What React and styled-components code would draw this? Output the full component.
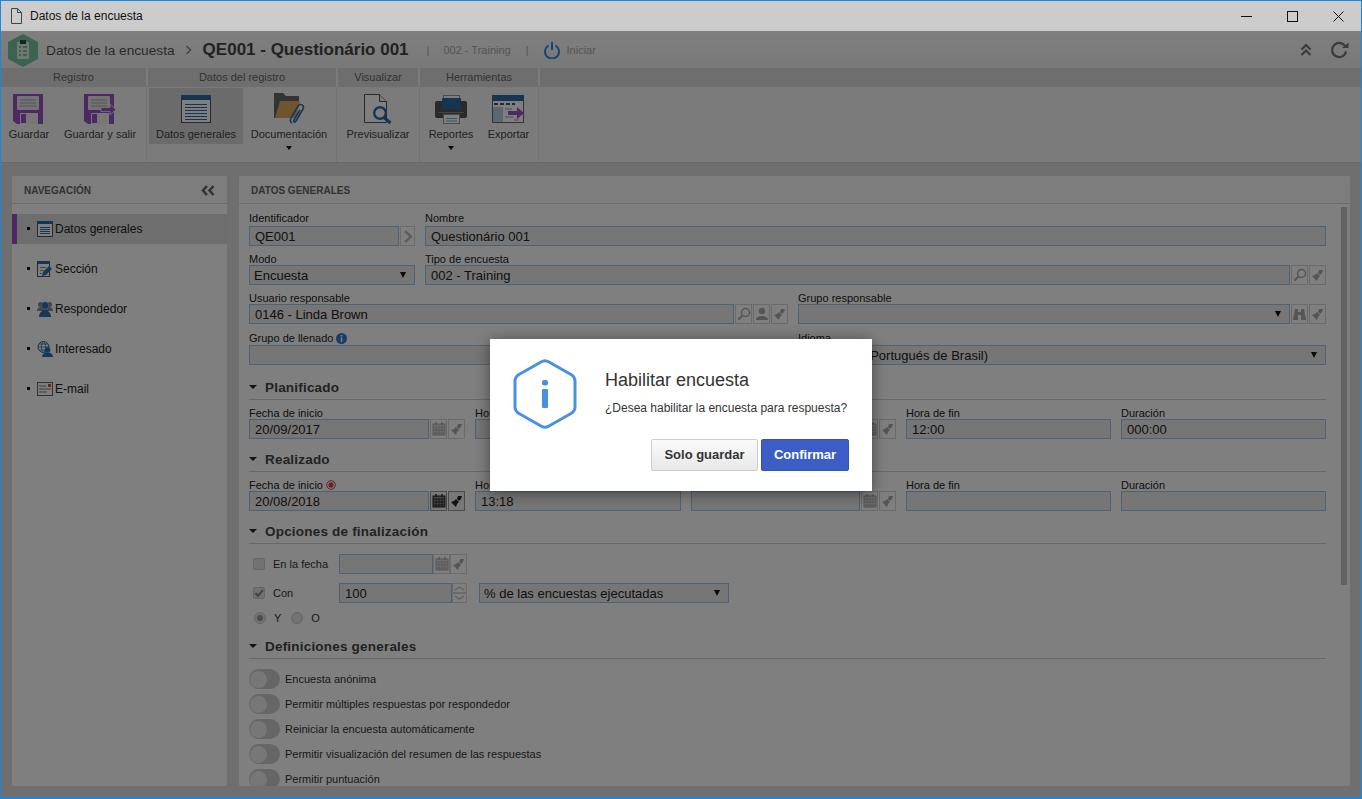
import React from "react";
import styled, { createGlobalStyle } from "styled-components";

const Global = createGlobalStyle`
  html, body { margin: 0; padding: 0; height: 100%; overflow: hidden; }
  body { font-family: "Liberation Sans", Arial, sans-serif; font-size: 12px; color: #222; }
  * { box-sizing: border-box; }
`;

const Window = styled.div`
  width: 1362px; height: 799px; display: flex; flex-direction: column;
  border: 1px solid #1b88e0; border-bottom-width: 2px; position: relative; background: #dedede; overflow: hidden;
`;
const TitleBar = styled.div`
  height: 30px; flex: none; background: #ccc; display: flex; align-items: center; padding-left: 9px; color: #111;
`;
const TitleIcon = styled.span` display: flex; margin-right: 7px; `;
const TitleText = styled.span` flex: 1; font-size: 12px; `;
const WinButton = styled.div` width: 46px; height: 30px; display: flex; align-items: center; justify-content: center; `;

const Header = styled.div`
  height: 37px; flex: none; background: linear-gradient(#fff, #f2f2f2); display: flex; align-items: center; padding: 1px 10px 0 7px;
`;
const Crumb = styled.span` font-size: 13.7px; color: #555; margin-left: 8px; `;
const CrumbSep = styled.span` margin: 0 10px; display: flex; `;
const Heading = styled.span` font-size: 17px; font-weight: bold; color: #444; `;
const HeaderSub = styled.span` font-size: 11px; color: #aaa; margin-left: ${p => p.$ml || 0}px; `;
const PowerWrap = styled.span` margin-left: 15px; display: flex; `;
const HeaderGrow = styled.div` flex: 1; `;
const HeaderTools = styled.div` display: flex; align-items: center; gap: 18px; padding-right: 2px; `;

const RibbonTabs = styled.div` height: 19px; flex: none; display: flex; background: #f6f6f6; gap: 2px; `;
const RibbonTab = styled.div`
  width: ${p => p.$w}px; flex: ${p => (p.$grow ? 1 : "none")}; background: #dcdcdc; text-align: center; line-height: 19px; font-size: 11px; color: #666;
`;
const Ribbon = styled.div` height: 76px; flex: none; display: flex; background: #f6f6f6; border-bottom: 1px solid #d2d2d2; `;
const RibbonGroup = styled.div`
  width: ${p => p.$w}px; flex: none; display: flex; gap: ${p => p.$gap || 0}px; padding-left: ${p => p.$pl || 0}px; padding-top: 1px; border-right: 1px solid #e4e4e4;
`;
const RibbonButton = styled.div`
  width: ${p => p.$w}px; height: 56px; flex: none; display: flex; flex-direction: column; align-items: center; padding-top: 4px; position: relative;
  background: ${p => (p.$active ? "#d6d6d6" : "transparent")}; color: #444; font-size: 11px;
`;
const RibbonIcon = styled.div` height: 34px; display: flex; align-items: center; justify-content: center; `;
const RibbonLabel = styled.span` margin-top: 2px; white-space: nowrap; line-height: 13px; `;
const Caret = styled.span`
  position: absolute; left: 50%; top: 58px; margin-left: -3px; border: 3px solid transparent; border-top: 4px solid #111; border-bottom: 0;
`;

const Body = styled.div` flex: 1; min-height: 0; display: flex; gap: 12px; padding: 13px 11px 11px 11px; background: #dedede; `;
const Panel = styled.div`
  width: ${p => (p.$w ? p.$w + "px" : "auto")}; flex: ${p => (p.$w ? "none" : 1)}; background: #fff; display: flex; flex-direction: column; position: relative; overflow: hidden; border-radius: 2px;
`;
const PanelHeader = styled.div`
  height: 28px; flex: none; display: flex; align-items: center; justify-content: space-between; padding: 2px 12px 0; background: #fbfbfb; border-bottom: 1px solid #d8d8d8;
  font-size: 10px; font-weight: bold; color: #666;
`;
const NavList = styled.div` display: flex; flex-direction: column; gap: 10px; padding-top: 10px; `;
const NavRow = styled.div`
  height: 30px; display: flex; align-items: center; padding-left: 15px; font-size: 12px; color: #222;
  background: ${p => (p.$on ? "#dcdcdc" : "transparent")};
  border-left: 5px solid ${p => (p.$on ? "#9a52c8" : "transparent")};
`;
const Bullet = styled.span` width: 3px; height: 3px; background: #111; margin-right: 7px; margin-left: -5px; margin-top: -2px; `;
const NavIcon = styled.span` width: 16px; height: 16px; display: flex; margin-right: 2px; `;

const Form = styled.div` padding: 8px 24px 0 10px; display: flex; flex-direction: column; width: 1111px; `;
const Row = styled.div` display: flex; gap: 10px; margin-top: ${p => p.$mt ?? 7}px; `;
const Field = styled.div`
  width: ${p => (p.$w ? p.$w + "px" : "auto")}; flex: ${p => (p.$w ? "none" : 1)}; min-width: 0; display: flex; flex-direction: column;
`;
const Label = styled.label`
  height: 12px; flex: none; line-height: 11px; font-size: 11px; color: #222; display: flex; align-items: center; gap: 3px; white-space: nowrap;
  margin-bottom: ${p => p.$mb || 0}px;
`;
const InputLine = styled.div` display: flex; gap: 1px; height: 20px; flex: none; `;
const Input = styled.div`
  flex: ${p => (p.$w ? "none" : "1 1 auto")}; width: ${p => (p.$w ? p.$w + "px" : "auto")}; min-width: 0; height: 20px; border: 1px solid #9dc4ee; background: #ececec;
  margin-left: ${p => p.$ml || 0}px; overflow: hidden;
  line-height: 16px; padding: 1px 5px 0 ${p => (p.$sel ? 4 : 5)}px; font-size: 13px; color: #222; display: flex; justify-content: space-between; align-items: center; white-space: nowrap;
`;
const BoxInput = styled(Input)` flex: none; width: 100%; `;
const SelArrow = styled.span` border: 3px solid transparent; border-top: 6px solid #111; border-bottom: 0; margin-right: 3px; margin-top: -1px; `;
const IconBtn = styled.div`
  width: ${p => p.$w || 17}px; height: 20px; flex: none; border: 1px solid ${p => (p.$dark ? "#999" : "#d6d6d6")}; display: flex; align-items: center; justify-content: center; background: ${p => (p.$dark ? "#f0f0f0" : "#fff")};
`;
const Section = styled.div`
  height: 22px; flex: none; margin-top: ${p => p.$mt ?? 11}px; padding-top: 2px; border-bottom: 1px solid #d0d0d0; display: flex; align-items: flex-start; font-size: 13.5px; font-weight: bold; color: #444; line-height: 16px; letter-spacing: 0.2px;
`;
const SectionCaret = styled.span` width: 0; height: 0; border-style: solid; border-color: #222 transparent transparent; border-width: 4px 4px 0; margin: 5px 8px 0 0; `;
const Spacer = styled.div` height: 7px; flex: none; `;
const OptionRow = styled.div` display: flex; align-items: center; height: 20px; flex: none; margin-top: ${p => p.$mt}px; font-size: 11px; color: #333; `;
const Check = styled.span`
  width: 12px; height: 12px; margin-left: 4px; margin-right: 8px; border: 1px solid #ccc; background: #e4e4e4; border-radius: 2px; display: flex; align-items: center; justify-content: center; flex: none;
`;
const OptionLabel = styled.span` width: 66px; flex: none; `;
const RadioRow = styled.div` display: flex; align-items: center; height: 16px; flex: none; margin-top: 7px; font-size: 11px; color: #333; padding-left: 5px; `;
const Radio = styled.span`
  width: 12px; height: 12px; border-radius: 50%; border: 1px solid #ccc; background: #e4e4e4; display: flex; align-items: center; justify-content: center; flex: none;
  margin-right: 8px;
  &::after { content: ""; width: 6px; height: 6px; border-radius: 50%; background: ${p => (p.$on ? "#999" : "transparent")}; }
`;
const RadioText = styled.span` margin-right: ${p => p.$mr || 0}px; `;
const ToggleList = styled.div` display: flex; flex-direction: column; gap: 5px; margin-top: 10px; `;
const ToggleRow = styled.div` display: flex; align-items: center; height: 20px; flex: none; font-size: 11px; color: #333; gap: 5px; white-space: nowrap; `;
const Toggle = styled.span`
  width: 31px; height: 20px; border-radius: 10px; background: #ccc; flex: none; display: flex; align-items: center; padding-left: 1px;
  &::after { content: ""; width: 17px; height: 17px; border-radius: 50%; background: #eee; }
`;
const Scroll = styled.div` position: absolute; right: 3px; top: 31px; width: 6px; height: 378px; background: #c6c6c6; `;

const Overlay = styled.div`
  position: absolute; left: 0; right: 0; top: 30px; bottom: 0; background: rgba(0,0,0,.5); display: flex; align-items: center; justify-content: center; padding-top: 2px;
`;
const Modal = styled.div`
  width: 382px; height: 152px; background: #fff; display: flex; box-shadow: 0 2px 14px rgba(0,0,0,.45); padding: 19px 23px 0 23px;
`;
const ModalIcon = styled.div` width: 92px; flex: none; `;
const ModalBody = styled.div` flex: 1; display: flex; flex-direction: column; `;
const ModalTitle = styled.div` font-size: 18px; color: #333; line-height: 22px; margin-top: 11px; `;
const ModalText = styled.div` font-size: 12px; color: #333; line-height: 14px; margin-top: 10px; `;
const ModalActions = styled.div` display: flex; justify-content: flex-end; gap: 3px; margin-top: 24px; `;
const Button = styled.div`
  height: 32px; width: ${p => p.$w}px; border-radius: 2px; font-weight: bold; font-size: 13px; line-height: 30px; text-align: center;
  color: ${p => (p.$primary ? "#fff" : "#333")};
  background: ${p => (p.$primary ? "#3c5cc6" : "linear-gradient(#fafafa,#e8e8e8)")};
  border: 1px solid ${p => (p.$primary ? "#3554b8" : "#ccc")};
`;

/* ---------- icons ---------- */
const PURPLE = "#9a52c8";
const Floppy = ({ arrow }) => (
  <svg width="33" height="31" viewBox="0 0 33 31">
    <path d="M0 0h30v30H4l-4-3z" fill={PURPLE} />
    <rect x="4" y="2" width="22" height="14" rx="1" fill="#e6e6e6" />
    <path d="M7 6h16M7 9h16M7 12h16" stroke="#aaa" />
    <rect x="7" y="19" width="18" height="11" fill="#eee" />
    <rect x="8" y="20" width="5" height="9" fill={PURPLE} />
    {arrow && <path d="M17 13.500h9V10l6 5.500-6 5.500v-3.500h-9z" fill={PURPLE} stroke="#f6f6f6" strokeWidth=".8" />}
  </svg>
);
const DocIcon = () => (
  <svg width="30" height="28" viewBox="0 0 30 28">
    <rect x=".5" y=".5" width="29" height="27" fill="#fff" stroke="#555" />
    <rect x="0" y="0" width="30" height="5" fill="#2b6aa8" />
    <path d="M4 9.500h22M4 12.500h22M4 15.500h22M4 18.500h22M4 21.500h22M4 24.500h22" stroke="#2b6aa8" />
  </svg>
);
const FolderIcon = () => (
  <svg width="31" height="32" viewBox="0 0 31 32">
    <path d="M0 25V0h9l3 3h13v6H8L3 25z" fill="#666" />
    <path d="M1 25L6 8h20l-4 17z" fill="#e0a858" />
    <path d="M18 30c-2-1-2-3-1-5l7-12c2-3 7-1 5 3l-7 12c-1 2-3 1-2-1l6-10" fill="none" stroke="#2b6fb8" strokeWidth="1.600" />
  </svg>
);
const PreviewIcon = () => (
  <svg width="30" height="30" viewBox="0 0 30 30">
    <path d="M1.500 .5h15l7 7v21h-22z" fill="#fff" stroke="#555" />
    <path d="M16.500 .5v7h7" fill="#eee" stroke="#555" />
    <circle cx="17" cy="19" r="5.800" fill="#fff" stroke="#2b6aa8" strokeWidth="2.400" />
    <path d="M21 23.500l6.500 5.500" stroke="#2b6aa8" strokeWidth="3.200" />
  </svg>
);
const PrinterIcon = () => (
  <svg width="32" height="29" viewBox="0 0 32 29">
    <rect x="8.500" y=".5" width="16" height="8" fill="#fff" stroke="#999" />
    <rect x="0" y="6" width="32" height="17" rx="2" fill="#555" />
    <rect x="7" y="3" width="19" height="11" rx="1" fill="#2b6aa8" />
    <path d="M3 17.500h26" stroke="#888" />
    <rect x="8.500" y="19.500" width="16" height="9" fill="#fff" stroke="#999" />
    <path d="M11 23.500h11M11 26h11" stroke="#7ba6cf" />
  </svg>
);
const ExportIcon = () => (
  <svg width="33" height="28" viewBox="0 0 33 28">
    <rect x=".5" y=".5" width="31" height="27" fill="#fff" stroke="#666" />
    <rect x="0" y="0" width="32" height="6" fill="#2b6aa8" />
    <path d="M2 9h4M8 9h4M14 9h4M20 9h3" stroke="#555" strokeWidth="2" />
    <rect x="1" y="12" width="10" height="15" fill="#b4d0e2" />
    <path d="M13 14h7M13 22h8M22 25h5" stroke="#999" />
    <path d="M16 16h9v-4l7 6-7 6v-4h-9z" fill={PURPLE} />
  </svg>
);
const Brush = ({ c = "#aaa" }) => (
  <svg width="13" height="13" viewBox="0 0 13 13">
    <path d="M8 1l4 0-1 3-2 2-2-2z" fill={c} />
    <path d="M6 4l3 3-2 2-1 3-5-5 3-1z" fill={c} />
  </svg>
);
const Magnifier = ({ c = "#aaa" }) => (
  <svg width="14" height="14" viewBox="0 0 14 14">
    <circle cx="8.500" cy="5.500" r="4" fill="none" stroke={c} strokeWidth="1.400" />
    <path d="M5.500 8.500L1.500 12.500" stroke={c} strokeWidth="2" />
  </svg>
);
const UserI = ({ c = "#aaa" }) => (
  <svg width="14" height="14" viewBox="0 0 14 14">
    <circle cx="7" cy="4" r="3.200" fill={c} />
    <path d="M1 13c0-3 3-4 6-4s6 1 6 4z" fill={c} />
  </svg>
);
const Binoculars = ({ c = "#aaa" }) => (
  <svg width="13" height="13" viewBox="0 0 13 13">
    <path d="M2 1h3v3h3V1h3l2 11H8V7H5v5H0z" fill={c} />
  </svg>
);
const Calendar = ({ c = "#aaa" }) => (
  <svg width="14" height="14" viewBox="0 0 14 14">
    <rect x="1" y="2" width="12" height="11" fill={c === "#aaa" ? "#ddd" : "#888"} stroke={c} />
    <path d="M1 5h12M4 5v8M7 5v8M10 5v8M1 8h12M1 11h12" stroke={c} strokeWidth=".8" />
    <path d="M4 0v3M10 0v3" stroke={c} strokeWidth="1.400" />
  </svg>
);
const Chevron = () => (
  <svg width="10" height="13" viewBox="0 0 10 13"><path d="M2 1l6 5.500L2 12" fill="none" stroke="#bbb" strokeWidth="2.500" /></svg>
);
const InfoDot = () => (
  <svg width="11" height="11" viewBox="0 0 11 11">
    <circle cx="5.500" cy="5.500" r="5.500" fill="#2f7cd0" />
    <rect x="4.700" y="2" width="1.600" height="1.600" fill="#fff" /><rect x="4.700" y="4.500" width="1.600" height="4.500" fill="#fff" />
  </svg>
);
const Req = () => (
  <svg width="10" height="10" viewBox="0 0 10 10">
    <circle cx="5" cy="5" r="4.300" fill="none" stroke="#d83a3a" />
    <path d="M5 2v6M2 5h6M3 3l4 4M7 3l-4 4" stroke="#d83a3a" strokeWidth="1.200" />
  </svg>
);
const Spinner = () => (
  <svg width="15" height="20" viewBox="0 0 15 20">
    <rect x=".5" y=".5" width="14" height="9" fill="#fff" stroke="#d6d6d6" />
    <rect x=".5" y="10.500" width="14" height="9" fill="#fff" stroke="#d6d6d6" />
    <path d="M3 7l4.500-3 4.500 3M3 13l4.500 3 4.500-3" fill="none" stroke="#bbb" strokeWidth="1.200" />
  </svg>
);
const navIcons = {
  doc: <svg width="16" height="16" viewBox="0 0 16 16"><rect x=".5" y=".5" width="15" height="15" fill="#fff" stroke="#555" /><rect x="0" y="0" width="16" height="3" fill="#2b6aa8" /><path d="M3 6.500h10M3 8.500h10M3 10.500h10M3 12.500h10" stroke="#2b6aa8" /></svg>,
  edit: <svg width="16" height="16" viewBox="0 0 16 16"><rect x=".5" y=".5" width="12" height="15" fill="#fff" stroke="#555" /><rect x="0" y="0" width="13" height="3" fill="#2b6aa8" /><path d="M3 6.500h6M3 9.500h4M3 12.500h2" stroke="#888" /><path d="M5 15l1-4 6-6 3 3-6 6z" fill="#2b6fb8" /></svg>,
  users: <svg width="16" height="16" viewBox="0 0 16 16"><circle cx="3.500" cy="3.500" r="2.500" fill="#888" /><circle cx="12.500" cy="3.500" r="2.500" fill="#888" /><path d="M0 10c0-3 2-4 4-4h8c2 0 4 1 4 4z" fill="#888" /><circle cx="8" cy="4.500" r="3.800" fill="#2b6fb8" stroke="#ddd" strokeWidth=".5" /><path d="M2 16c0-4 3-7 6-7s6 3 6 7z" fill="#2b6fb8" /></svg>,
  globe: <svg width="16" height="16" viewBox="0 0 16 16"><circle cx="6.500" cy="6" r="5.500" fill="#fff" stroke="#2b6aa8" /><path d="M1 6h11M6.500 .5c-3 3-3 8 0 11M6.500 .5c3 3 3 8 0 11M2 3h9M2 9h9" fill="none" stroke="#2b6aa8" strokeWidth=".8" /><circle cx="10.500" cy="9" r="2.800" fill="#2b6fb8" /><path d="M5 16c0-3 2-4.500 5.500-4.500S16 13 16 16z" fill="#2b6fb8" /></svg>,
  mail: <svg width="16" height="16" viewBox="0 0 16 16"><rect x=".5" y="1.500" width="15" height="13" fill="#fff" stroke="#666" /><rect x="11" y="3" width="3" height="3" fill="#d84a3c" /><path d="M2 5h7M2 8h12M2 11h8" stroke="#777" /></svg>,
};

const DateRow = ({ a, b, c, d, e, req, dark }) => (
  <Row $mt={0}>
    <Field $w={216}>
      <Label>Fecha de inicio{req && <Req />}</Label>
      <InputLine>
        <Input>{a}</Input>
        <IconBtn $dark={dark}><Calendar c={dark ? "#222" : "#aaa"} /></IconBtn>
        <IconBtn $dark={dark}><Brush c={dark ? "#222" : "#aaa"} /></IconBtn>
      </InputLine>
    </Field>
    <Field $w={206}>
      <Label>Hora de inicio</Label>
      <BoxInput>{b}</BoxInput>
    </Field>
    <Field $w={205}>
      <Label>Fecha de fin</Label>
      <InputLine>
        <Input>{c}</Input>
        <IconBtn><Calendar /></IconBtn>
        <IconBtn><Brush /></IconBtn>
      </InputLine>
    </Field>
    <Field $w={205}>
      <Label>Hora de fin</Label>
      <BoxInput>{d}</BoxInput>
    </Field>
    <Field $w={205}>
      <Label>Duración</Label>
      <BoxInput>{e}</BoxInput>
    </Field>
  </Row>
);

const SectionTitle = ({ children, mt }) => (
  <Section $mt={mt}><SectionCaret />{children}</Section>
);

const nav = [
  ["doc", "Datos generales", true], ["edit", "Sección"], ["users", "Respondedor"], ["globe", "Interesado"], ["mail", "E-mail"],
];
const toggles = [
  "Encuesta anónima", "Permitir múltiples respuestas por respondedor", "Reiniciar la encuesta automáticamente",
  "Permitir visualización del resumen de las respuestas", "Permitir puntuación",
];

export default function App() {
  return (
    <Window>
      <Global />
      <TitleBar>
        <TitleIcon><svg width="13" height="16" viewBox="0 0 13 16"><path d="M1.500 .5h6l4 4v11h-10z M7.500 .5v4h4" fill="none" stroke="#444" /></svg></TitleIcon>
        <TitleText>Datos de la encuesta</TitleText>
        <WinButton><svg width="11" height="11" viewBox="0 0 11 11"><path d="M0 5.500h11" stroke="#111" /></svg></WinButton>
        <WinButton><svg width="11" height="11" viewBox="0 0 11 11"><rect x=".5" y=".5" width="10" height="10" fill="none" stroke="#111" /></svg></WinButton>
        <WinButton><svg width="11" height="11" viewBox="0 0 11 11"><path d="M.5 .5l10 10M10.500 .5l-10 10" stroke="#111" /></svg></WinButton>
      </TitleBar>
      <Header>
        <svg width="30" height="33" viewBox="0 0 30 33">
          <path d="M15 0l15 8v17l-15 8-15-8V8z" fill="#74c8a0" />
          <rect x="9" y="8" width="12" height="17" fill="#dff2e8" rx="1" />
          <rect x="12" y="6" width="6" height="4" fill="#2a4f3f" />
          <path d="M11 13h2M15 13h4M11 17h2M15 17h4M11 21h2M15 21h4" stroke="#3c7a5c" />
        </svg>
        <Crumb>Datos de la encuesta</Crumb>
        <CrumbSep><svg width="8" height="10" viewBox="0 0 8 10"><path d="M1.500 1l4 4-4 4" fill="none" stroke="#888" strokeWidth="1.500" /></svg></CrumbSep>
        <Heading>QE001 - Questionário 001</Heading>
        <HeaderSub $ml={18}>|</HeaderSub>
        <HeaderSub $ml={14}>002 - Training</HeaderSub>
        <HeaderSub $ml={15}>|</HeaderSub>
        <PowerWrap>
          <svg width="16" height="18" viewBox="0 0 16 18"><path d="M4.500 4.500a7 7 0 1 0 7 0M8 1v8" fill="none" stroke="#2f8be0" strokeWidth="2" /></svg>
        </PowerWrap>
        <HeaderSub $ml={7}>Iniciar</HeaderSub>
        <HeaderGrow />
        <HeaderTools>
          <svg width="12" height="14" viewBox="0 0 12 14"><path d="M1.500 6.500L6 2l4.500 4.500M1.500 12L6 7.500l4.500 4.500" fill="none" stroke="#777" strokeWidth="2.200" /></svg>
          <svg width="19" height="18" viewBox="0 0 19 18"><path d="M15.500 6A7 7 0 1 0 16 10.500" fill="none" stroke="#777" strokeWidth="2.200" /><path d="M12 7h6.500V1.500z" fill="#777" /></svg>
        </HeaderTools>
      </Header>
      <RibbonTabs>
        <RibbonTab $w={145}>Registro</RibbonTab>
        <RibbonTab $w={188}>Datos del registro</RibbonTab>
        <RibbonTab $w={80}>Visualizar</RibbonTab>
        <RibbonTab $w={118}>Herramientas</RibbonTab>
        <RibbonTab $grow />
      </RibbonTabs>
      <Ribbon>
        <RibbonGroup $w={146} $pl={3}>
          <RibbonButton $w={50}><RibbonIcon><Floppy /></RibbonIcon><RibbonLabel>Guardar</RibbonLabel></RibbonButton>
          <RibbonButton $w={92}><RibbonIcon><Floppy arrow /></RibbonIcon><RibbonLabel>Guardar y salir</RibbonLabel></RibbonButton>
        </RibbonGroup>
        <RibbonGroup $w={190} $pl={2}>
          <RibbonButton $w={94} $active><RibbonIcon><DocIcon /></RibbonIcon><RibbonLabel>Datos generales</RibbonLabel></RibbonButton>
          <RibbonButton $w={92}><RibbonIcon><FolderIcon /></RibbonIcon><RibbonLabel>Documentación</RibbonLabel><Caret /></RibbonButton>
        </RibbonGroup>
        <RibbonGroup $w={83}>
          <RibbonButton $w={82}><RibbonIcon><PreviewIcon /></RibbonIcon><RibbonLabel>Previsualizar</RibbonLabel></RibbonButton>
        </RibbonGroup>
        <RibbonGroup $w={119} $pl={2}>
          <RibbonButton $w={58}><RibbonIcon><PrinterIcon /></RibbonIcon><RibbonLabel>Reportes</RibbonLabel><Caret /></RibbonButton>
          <RibbonButton $w={57}><RibbonIcon><ExportIcon /></RibbonIcon><RibbonLabel>Exportar</RibbonLabel></RibbonButton>
        </RibbonGroup>
      </Ribbon>
      <Body>
        <Panel $w={215}>
          <PanelHeader>
            NAVEGACIÓN
            <svg width="14" height="11" viewBox="0 0 14 11"><path d="M6 1L2 5.500 6 10M12.500 1L8.500 5.500l4 4.500" fill="none" stroke="#666" strokeWidth="2.600" /></svg>
          </PanelHeader>
          <NavList>
            {nav.map(([ic, t, on]) => (
              <NavRow key={t} $on={on}><Bullet /><NavIcon>{navIcons[ic]}</NavIcon>{t}</NavRow>
            ))}
          </NavList>
        </Panel>
        <Panel>
          <PanelHeader>DATOS GENERALES</PanelHeader>
          <Scroll />
          <Form>
            <Row $mt={0}>
              <Field $w={166}>
                <Label $mb={2}>Identificador</Label>
                <InputLine><Input>QE001</Input><IconBtn $w={15}><Chevron /></IconBtn></InputLine>
              </Field>
              <Field>
                <Label $mb={2}>Nombre</Label>
                <BoxInput>Questionário 001</BoxInput>
              </Field>
            </Row>
            <Row>
              <Field $w={166}>
                <Label>Modo</Label>
                <BoxInput $sel>Encuesta<SelArrow /></BoxInput>
              </Field>
              <Field>
                <Label>Tipo de encuesta</Label>
                <InputLine>
                  <Input>002 - Training</Input>
                  <IconBtn><Magnifier /></IconBtn><IconBtn><Brush /></IconBtn>
                </InputLine>
              </Field>
            </Row>
            <Row>
              <Field $w={539}>
                <Label>Usuario responsable</Label>
                <InputLine>
                  <Input>0146 - Linda Brown</Input>
                  <IconBtn><Magnifier /></IconBtn><IconBtn><UserI /></IconBtn><IconBtn><Brush /></IconBtn>
                </InputLine>
              </Field>
              <Field>
                <Label>Grupo responsable</Label>
                <InputLine>
                  <Input><span /><SelArrow /></Input>
                  <IconBtn><Binoculars /></IconBtn><IconBtn><Brush /></IconBtn>
                </InputLine>
              </Field>
            </Row>
            <Row $mt={8}>
              <Field $w={539}>
                <Label $mb={1}>Grupo de llenado <InfoDot /></Label>
                <BoxInput />
              </Field>
              <Field>
                <Label $mb={1}>Idioma</Label>
                <BoxInput $sel>Portugués (Portugués de Brasil)<SelArrow /></BoxInput>
              </Field>
            </Row>
            <SectionTitle mt={13}>Planificado</SectionTitle>
            <Spacer />
            <DateRow a="20/09/2017" c="20/09/2017" d="12:00" e="000:00" />
            <SectionTitle>Realizado</SectionTitle>
            <Spacer />
            <DateRow a="20/08/2018" b="13:18" req dark />
            <SectionTitle>Opciones de finalización</SectionTitle>
            <OptionRow $mt={10}>
              <Check /><OptionLabel>En la fecha</OptionLabel>
              <Input $w={94} />
              <IconBtn><Calendar /></IconBtn><IconBtn><Brush /></IconBtn>
            </OptionRow>
            <OptionRow $mt={9}>
              <Check><svg width="10" height="10" viewBox="0 0 10 10"><path d="M1.500 5l2.500 3 5-6" fill="none" stroke="#888" strokeWidth="2" /></svg></Check>
              <OptionLabel>Con</OptionLabel>
              <Input $w={113}>100</Input>
              <Spinner />
              <Input $w={250} $ml={12} $sel>% de las encuestas ejecutadas<SelArrow /></Input>
            </OptionRow>
            <RadioRow>
              <Radio $on /><RadioText $mr={10}>Y</RadioText>
              <Radio /><RadioText>O</RadioText>
            </RadioRow>
            <SectionTitle>Definiciones generales</SectionTitle>
            <ToggleList>
              {toggles.map(t => <ToggleRow key={t}><Toggle />{t}</ToggleRow>)}
            </ToggleList>
          </Form>
        </Panel>
      </Body>
      <Overlay>
        <Modal>
          <ModalIcon>
            <svg width="64" height="72" viewBox="0 0 64 72">
              <path d="M28 4Q32 1.500 36 4L58 16.500Q62 19 62 23V49Q62 53 58 55.500L36 68Q32 70.500 28 68L6 55.500Q2 53 2 49V23Q2 19 6 16.500Z" fill="none" stroke="#4a90e2" strokeWidth="3" />
              <rect x="29" y="22" width="6" height="5.500" rx="2" fill="#4a90e2" />
              <rect x="29" y="31" width="6" height="19" rx="1" fill="#4a90e2" />
            </svg>
          </ModalIcon>
          <ModalBody>
            <ModalTitle>Habilitar encuesta</ModalTitle>
            <ModalText>¿Desea habilitar la encuesta para respuesta?</ModalText>
            <ModalActions>
              <Button $w={107}>Solo guardar</Button>
              <Button $w={88} $primary>Confirmar</Button>
            </ModalActions>
          </ModalBody>
        </Modal>
      </Overlay>
    </Window>
  );
}
